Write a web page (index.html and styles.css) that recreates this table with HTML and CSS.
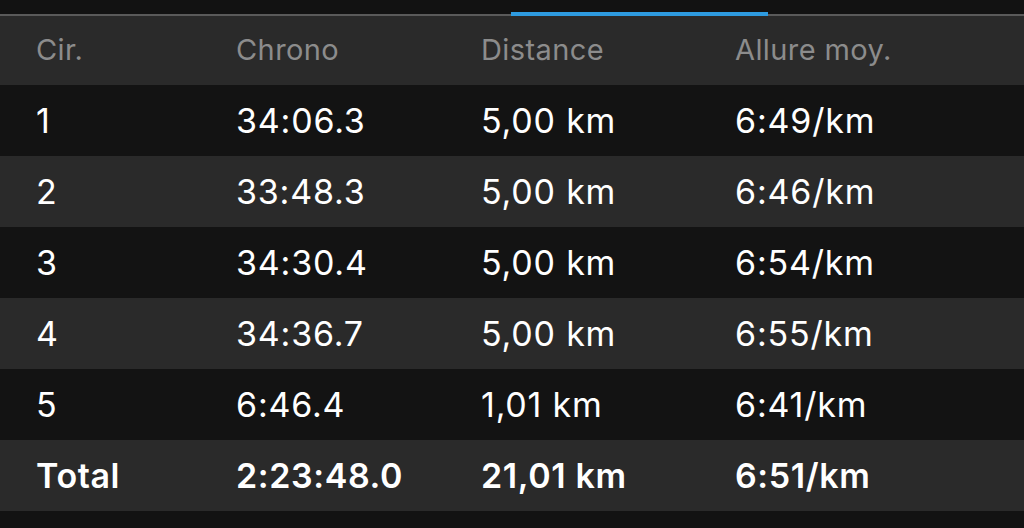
FILE: index.html
```html
<!DOCTYPE html>
<html lang="fr">
<head>
    <meta charset="UTF-8">
    <title>Circuits</title>
    <link rel="stylesheet" href="styles.css">
</head>
<body>
<div class="tabs">
    <div class="tab-line"></div>
    <div class="tab-active"></div>
</div>

<div class="laps">
    <div class="row head">
        <span>Cir.</span><span>Chrono</span><span>Distance</span><span>Allure moy.</span>
    </div>
    <div class="row dark">
        <span>1</span><span>34:06.3</span><span>5,00 km</span><span>6:49/km</span>
    </div>
    <div class="row">
        <span>2</span><span>33:48.3</span><span>5,00 km</span><span>6:46/km</span>
    </div>
    <div class="row dark">
        <span>3</span><span>34:30.4</span><span>5,00 km</span><span>6:54/km</span>
    </div>
    <div class="row">
        <span>4</span><span>34:36.7</span><span>5,00 km</span><span>6:55/km</span>
    </div>
    <div class="row dark">
        <span>5</span><span>6:46.4</span><span>1,01 km</span><span>6:41/km</span>
    </div>
    <div class="row total">
        <span>Total</span><span>2:23:48.0</span><span>21,01 km</span><span>6:51/km</span>
    </div>
</div>
</body>
</html>
```

FILE: styles.css
```css
body {
    margin: 0;
    background-color: #121212;
    font-family: Inter, "Noto Sans", sans-serif;
    overflow: hidden;
}

.tabs {
    position: relative;
    height: 16px;
}

.tab-line {
    position: absolute;
    left: 0;
    right: 0;
    top: 14px;
    height: 2px;
    background-color: #5a5a5a;
}

.tab-active {
    position: absolute;
    left: 511px;
    width: 257px;
    top: 12px;
    height: 4px;
    background-color: #2e9be0;
}

.row {
    display: grid;
    grid-template-columns: 200px 245px 254px 1fr;
    align-items: center;
    height: 71px;
    padding-left: 36px;
    background-color: #2a2a2a;
    color: #ffffff;
    font-size: 34px;
    letter-spacing: 0.8px;
}

.row.dark {
    background-color: #131313;
}

.row.head {
    height: 69px;
    color: #8c8c8c;
    font-size: 29px;
    letter-spacing: 0.4px;
    padding-bottom: 2px;
    box-sizing: border-box;
}

.row.total {
    font-weight: 600;
    letter-spacing: 0.6px;
}
```
